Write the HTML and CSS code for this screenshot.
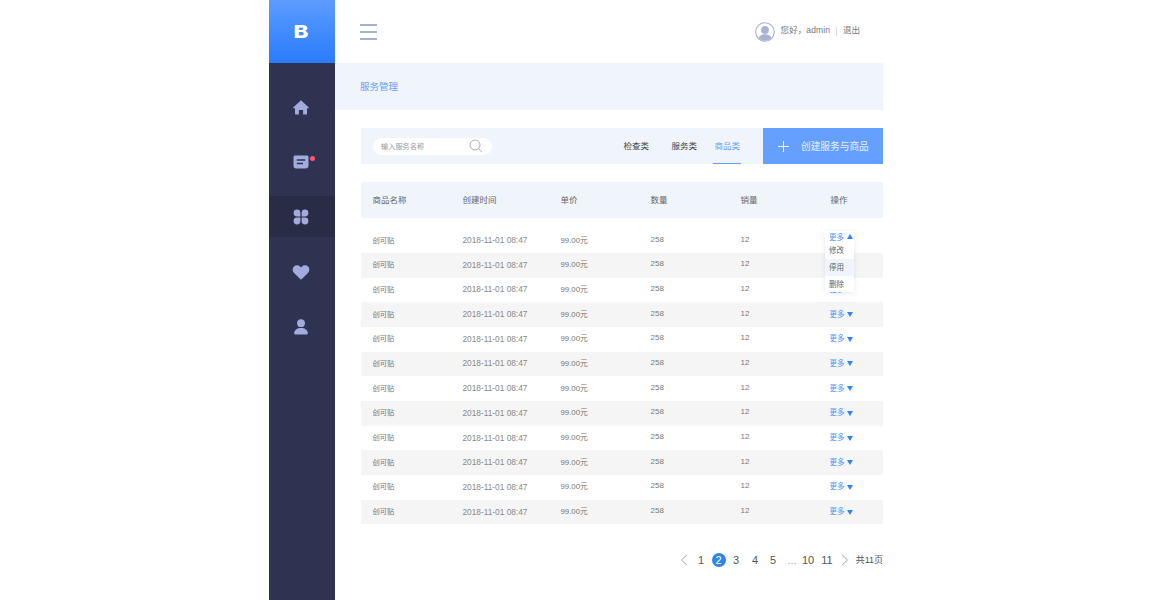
FILE: index.html
```html
<!DOCTYPE html>
<html lang="zh">
<head>
<meta charset="utf-8">
<title>服务管理</title>
<link rel="stylesheet" href="styles.css">
</head>
<body>
<div class="app">
  <aside class="sidebar">
    <div class="logo"><span class="logo-b">B</span></div>
    <nav class="nav">
      <div class="nav-item">
        <svg class="nav-icon" viewBox="0 0 18 18"><path class="ico" d="M9 2.200 1.200 9.400c-.4.400-.1.900.4.900H3v5.400c0 .5.400.9.900.9h3v-4.600h4.200v4.600h3c.5 0 .9-.4.900-.9v-5.400h1.400c.5 0 .8-.5.400-.9z"/></svg>
      </div>
      <div class="nav-item">
        <span class="msg-wrap">
          <svg class="nav-icon" viewBox="0 0 18 18"><path class="ico" d="M4 2.500h11c.9 0 1.500.7 1.500 1.500v8.500c0 1.800-1.200 3-3 3H4c-1.400 0-2.500-1.100-2.500-2.500V4c0-.8.700-1.500 1.500-1.500z"/><path class="ico-cut" d="M4.800 6.300h8.400v1.500H4.800zM4.800 9.700h6.200v1.500H4.800z"/></svg>
          <span class="dot"></span>
        </span>
      </div>
      <div class="nav-item active">
        <svg class="nav-icon" viewBox="0 0 18 18"><path class="ico" d="M5 1.600a3.400 3.400 0 0 1 3.400 3.400v3.400H5A3.400 3.400 0 0 1 5 1.600zM13 1.600a3.400 3.400 0 0 1 0 6.800H9.600V5A3.400 3.400 0 0 1 13 1.600zM5 9.600h3.400V13A3.400 3.400 0 1 1 5 9.600zM9.600 9.600H13a3.400 3.400 0 1 1-3.400 3.400z"/></svg>
      </div>
      <div class="nav-item">
        <svg class="nav-icon" viewBox="0 0 18 18"><path class="ico" d="M9 16.800 2 10C.2 8.200.2 5.300 1.900 3.600c1.700-1.700 4.500-1.700 6.200 0l.9.900.9-.9c1.700-1.700 4.500-1.700 6.200 0 1.700 1.700 1.700 4.600-.1 6.400z"/></svg>
      </div>
      <div class="nav-item">
        <svg class="nav-icon" viewBox="0 0 18 18"><circle class="ico" cx="9" cy="5.200" r="3.900"/><path class="ico" d="M2.200 15.200c0-3.200 3-5.200 6.800-5.200s6.800 2 6.800 5.200c0 .9-.6 1.300-1.400 1.300H3.600c-.8 0-1.400-.4-1.400-1.300z"/></svg>
      </div>
    </nav>
  </aside>
  <main class="main">
    <header class="topbar">
      <div class="menu-btn"><span></span><span></span><span></span></div>
      <div class="user">
        <svg class="avatar" viewBox="0 0 20 20"><defs><clipPath id="av"><circle cx="10" cy="10" r="8.700"/></clipPath></defs><circle cx="10" cy="10" r="9.300" fill="#fff" stroke="#a8b2d2" stroke-width="1.100"/><g clip-path="url(#av)" fill="#a8b2d2"><circle cx="10" cy="8" r="3.900"/><path d="M2.500 20c0-5 3-7.800 7.500-7.800s7.500 2.800 7.500 7.800z"/></g></svg>
        <span class="greet">您好，admin</span>
        <span class="sep"></span>
        <span class="logout">退出</span>
      </div>
    </header>
    <div class="crumb">服务管理</div>
    <section class="content">
      <div class="toolbar">
        <div class="search">
          <span class="placeholder">输入服务名称</span>
          <svg class="search-icon" viewBox="0 0 14 14"><circle cx="6" cy="6" r="5" fill="none" stroke="#9a9a9a" stroke-width=".8"/><path d="m9.700 9.700 3.300 3.500" fill="none" stroke="#9a9a9a" stroke-width=".8"/></svg>
        </div>
        <div class="tabs">
          <span class="tab">检查类</span>
          <span class="tab">服务类</span>
          <span class="tab on">商品类</span>
        </div>
        <div class="create">
          <svg class="plus" viewBox="0 0 11 11"><path d="M5.500 0v11M0 5.500h11" stroke="#fff" stroke-width="1"/></svg>
          <span>创建服务与商品</span>
        </div>
      </div>
      <div class="table">
        <div class="row head">
          <span>商品名称</span><span>创建时间</span><span>单价</span><span>数量</span><span>销量</span><span class="op-head">操作</span>
        </div>
        <div class="rows">
          <div class="row"><span class="name">创可贴</span><span class="date">2018-11-01 08:47</span><span class="price">99.00元</span><span class="num">258</span><span class="num">12</span><span class="more"></span></div>
          <div class="row"><span class="name">创可贴</span><span class="date">2018-11-01 08:47</span><span class="price">99.00元</span><span class="num">258</span><span class="num">12</span><span class="more"></span></div>
          <div class="row"><span class="name">创可贴</span><span class="date">2018-11-01 08:47</span><span class="price">99.00元</span><span class="num">258</span><span class="num">12</span><span class="more">更多<i class="tri"></i></span></div>
          <div class="row"><span class="name">创可贴</span><span class="date">2018-11-01 08:47</span><span class="price">99.00元</span><span class="num">258</span><span class="num">12</span><span class="more">更多<i class="tri"></i></span></div>
          <div class="row"><span class="name">创可贴</span><span class="date">2018-11-01 08:47</span><span class="price">99.00元</span><span class="num">258</span><span class="num">12</span><span class="more">更多<i class="tri"></i></span></div>
          <div class="row"><span class="name">创可贴</span><span class="date">2018-11-01 08:47</span><span class="price">99.00元</span><span class="num">258</span><span class="num">12</span><span class="more">更多<i class="tri"></i></span></div>
          <div class="row"><span class="name">创可贴</span><span class="date">2018-11-01 08:47</span><span class="price">99.00元</span><span class="num">258</span><span class="num">12</span><span class="more">更多<i class="tri"></i></span></div>
          <div class="row"><span class="name">创可贴</span><span class="date">2018-11-01 08:47</span><span class="price">99.00元</span><span class="num">258</span><span class="num">12</span><span class="more">更多<i class="tri"></i></span></div>
          <div class="row"><span class="name">创可贴</span><span class="date">2018-11-01 08:47</span><span class="price">99.00元</span><span class="num">258</span><span class="num">12</span><span class="more">更多<i class="tri"></i></span></div>
          <div class="row"><span class="name">创可贴</span><span class="date">2018-11-01 08:47</span><span class="price">99.00元</span><span class="num">258</span><span class="num">12</span><span class="more">更多<i class="tri"></i></span></div>
          <div class="row"><span class="name">创可贴</span><span class="date">2018-11-01 08:47</span><span class="price">99.00元</span><span class="num">258</span><span class="num">12</span><span class="more">更多<i class="tri"></i></span></div>
          <div class="row"><span class="name">创可贴</span><span class="date">2018-11-01 08:47</span><span class="price">99.00元</span><span class="num">258</span><span class="num">12</span><span class="more">更多<i class="tri"></i></span></div>
          <div class="dropdown">
            <div class="dd-head">更多<i class="tri tri-up"></i></div>
            <div class="dd-item">修改</div>
            <div class="dd-item hl">停用</div>
            <div class="dd-item">删除</div>
          </div>
        </div>
      </div>
      <div class="pager">
        <svg class="chev" viewBox="0 0 8 12"><path d="M7 .8 1.500 6 7 11.200" fill="none" stroke="#999" stroke-width=".9"/></svg>
        <span class="pg p1">1</span>
        <span class="pg cur">2</span>
        <span class="pg p3">3</span>
        <span class="pg p4">4</span>
        <span class="pg p5">5</span>
        <span class="pg dots">...</span>
        <span class="pg p10">10</span>
        <span class="pg p11">11</span>
        <svg class="chev chev-r" viewBox="0 0 8 12"><path d="M1 .8 6.500 6 1 11.200" fill="none" stroke="#999" stroke-width=".9"/></svg>
        <span class="total">共11页</span>
      </div>
    </section>
  </main>
</div>
</body>
</html>
```
FILE: styles.css
```css
* { box-sizing: border-box; }
html, body { margin: 0; padding: 0; height: 100%; background: #fff; overflow: hidden; }
body { font-family: "Liberation Sans", "Noto Sans CJK SC", sans-serif; color: #666; }
.app { display: flex; width: 614px; height: 600px; margin-left: 269px; }

.sidebar { width: 66px; flex: none; background: #2d3350; display: flex; flex-direction: column; }
.logo { height: 63px; padding-right: 2px; background: linear-gradient(180deg, #5c9cff 0%, #2a7bfd 100%); color: #fff; font-family: "Inter", sans-serif; font-weight: 800; font-size: 18px; line-height: 1; display: flex; align-items: center; justify-content: center; }
.logo-b { display: block; transform: scale(1.25, 1); }
.nav { display: flex; flex-direction: column; gap: 14px; padding-top: 23px; }
.nav-item { height: 41px; padding-right: 2px; display: flex; align-items: center; justify-content: center; }
.nav-item.active { background: #282c47; }
.nav-icon { width: 18px; height: 18px; display: block; }
.ico { fill: #a1abdc; }
.ico-cut { fill: #2d3350; }
.msg-wrap { position: relative; display: block; }
.dot { position: absolute; width: 5px; height: 5px; border-radius: 50%; background: #ff5570; left: 18px; top: 3px; }

.main { flex: 1; display: flex; flex-direction: column; min-width: 0; }
.topbar { height: 63px; display: flex; align-items: center; justify-content: space-between; padding: 0 23px 0 25px; }
.menu-btn { display: flex; flex-direction: column; gap: 5px; width: 17px; }
.menu-btn span { height: 2px; background: #a8b2cf; display: block; flex: none; }
.user { display: flex; align-items: center; font-size: 8.500px; color: #777; }
.avatar { width: 20px; height: 20px; margin-right: 6px; flex: none; }
.greet { letter-spacing: .1px; line-height: 10px; padding-bottom: 3px; }
.logout { line-height: 10px; padding-bottom: 3px; }
.sep { width: 1px; height: 9px; background: #ddd; margin: 0 6px; }
.crumb { height: 47px; background: #f0f4fb; color: #659fff; font-size: 9.500px; line-height: 47px; padding-left: 25px; }
.content { padding: 18px 0 0 26px; display: flex; flex-direction: column; }

.toolbar { height: 36px; background: #f0f4fb; display: flex; align-items: center; }
.search { width: 119px; height: 17px; margin-left: 12px; background: #fff; border-radius: 9px; display: flex; align-items: center; justify-content: space-between; padding: 0 9px 0 8px; }
.placeholder { font-size: 7.200px; color: #999; }
.search-icon { width: 14px; height: 14px; }
.tabs { display: flex; gap: 22.500px; margin-left: auto; margin-right: 23px; height: 36px; align-items: center; }
.tab { font-size: 8.500px; color: #444; position: relative; line-height: 36px; }
.tab.on { color: #659fff; margin-left: -5px; }
.tab.on::after { content: ""; position: absolute; left: -1px; right: -1px; bottom: 0; height: 1px; background: #659fff; }
.create { width: 120px; height: 36px; flex: none; background: #659fff; color: #e6efff; font-size: 9.700px; display: flex; align-items: center; padding-left: 15px; gap: 12px; }
.plus { width: 11px; height: 11px; }

.table { margin-top: 18px; }
.row { display: grid; grid-template-columns: 90px 98px 90px 90px 89px 1fr; padding-left: 11.500px; height: 24.700px; align-items: center; font-size: 8px; color: #777; }
.row > span { white-space: nowrap; line-height: 10px; }
.head { height: 36px; background: #f0f4fb; font-size: 8.500px; color: #666; padding-bottom: 1px; }
.op-head { padding-left: 1px; }
.rows { position: relative; padding-top: 10.200px; }
.rows .row:nth-child(even) { background: #f5f5f5; }
.name { font-size: 7.300px; }
.row > .date { font-size: 8.300px; color: #888; padding-bottom: 1px; }
.price { font-size: 7.800px; }
.num { padding-bottom: 2px; }
.more { color: #4f97f5; font-size: 7.500px; display: flex; align-items: center; }
.tri { display: inline-block; width: 0; height: 0; margin-left: 2.500px; border-left: 3px solid transparent; border-right: 3px solid transparent; border-top: 5px solid #2f86f0; }
.tri-up { border-top: 0; border-bottom: 5px solid #2f86f0; vertical-align: 1px; }

.dropdown { position: absolute; left: 464px; top: 13px; width: 29px; height: 61px; background: #fff; box-shadow: 0 1px 5px rgba(120, 130, 160, .18); font-size: 7.500px; color: #666; }
.dd-head { height: 11px; line-height: 14px; padding-left: 4px; color: #4f97f5; }
.dd-item { height: 17px; line-height: 17px; padding-left: 4px; }
.hl { background: #f0f4fb; }

.pager { position: relative; height: 20px; margin-top: 26px; font-size: 11px; color: #555; }
.pg { position: absolute; top: 0; line-height: 20px; transform: translateX(-50%); }
.pager .chev { position: absolute; left: 319px; top: 4px; width: 8px; height: 12px; }
.pager .chev-r { left: 480px; }
.p1 { left: 340px; }
.cur { left: 357.500px; top: 3px; width: 14px; height: 14px; line-height: 14px; text-align: center; border-radius: 50%; background: #2f86e6; color: #fff; }
.p3 { left: 375px; }
.p4 { left: 394px; }
.p5 { left: 412px; }
.dots { left: 431px; color: #aaa; }
.p10 { left: 447px; }
.p11 { left: 466px; }
.total { position: absolute; right: 0; top: 0; line-height: 20px; font-size: 9px; color: #555; }
```
